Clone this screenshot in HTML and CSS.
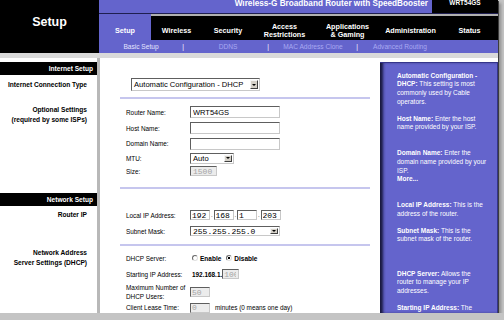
FILE: index.html
```html
<!DOCTYPE html>
<html lang="en">
<head>
    <meta charset="UTF-8">
    <meta name="viewport" content="width=device-width, initial-scale=1.0">
    <title>Setup - Basic Setup</title>
    <link rel="stylesheet" href="styles.css">
</head>
<body>

<div class="frame">
    <div class="header">
        <div class="page-title">Setup</div>
        <div class="nav">
            <div class="product">
                <span class="product-name">Wireless-G Broadband Router with SpeedBooster</span>
                <span class="model">WRT54GS</span>
            </div>
            <div class="tabs">
                <div class="tab active">Setup</div>
                <div class="tab t-wireless">Wireless</div>
                <div class="tab t-security">Security</div>
                <div class="tab t-access">Access<br>Restrictions</div>
                <div class="tab t-apps">Applications<br>&amp; Gaming</div>
                <div class="tab t-admin">Administration</div>
                <div class="tab t-status">Status</div>
            </div>
            <div class="subtabs">
                <span class="current">Basic Setup</span>
                <span class="sep">|</span>
                <span>DDNS</span>
                <span class="sep">|</span>
                <span>MAC Address Clone</span>
                <span class="sep">|</span>
                <span>Advanced Routing</span>
            </div>
        </div>
    </div>
    <div class="strip"></div>

    <div class="main">
        <div class="side">
            <div class="bar internet">Internet Setup</div>
            <div class="side-label conn">Internet Connection Type</div>
            <div class="side-label optional">Optional Settings<br>(required by some ISPs)</div>
            <div class="bar network">Network Setup</div>
            <div class="side-label router-ip">Router IP</div>
            <div class="side-label dhcp">Network Address<br>Server Settings (DHCP)</div>
        </div>

        <div class="content">
            <div class="conn-type">
                <div class="select conn-select">
                    <span class="select-value">Automatic Configuration - DHCP</span>
                    <span class="drop"></span>
                </div>
            </div>
            <div class="divider first"></div>

            <div class="row h16 top5">
                <span class="label">Router Name:</span>
                <input class="field name" type="text" value="WRT54GS">
            </div>
            <div class="row h16">
                <span class="label">Host Name:</span>
                <input class="field name" type="text" value="">
            </div>
            <div class="row h15">
                <span class="label">Domain Name:</span>
                <input class="field name" type="text" value="">
            </div>
            <div class="row h14">
                <span class="label">MTU:</span>
                <div class="select mtu-select">
                    <span class="select-value">Auto</span>
                    <span class="drop"></span>
                </div>
            </div>
            <div class="row h12">
                <span class="label">Size:</span>
                <input class="field mono size" type="text" value="1500" disabled>
            </div>

            <div class="divider second"></div>

            <div class="row h16 top18">
                <span class="label">Local IP Address:</span>
                <div class="ip">
                    <input class="field mono ip-part" type="text" value="192">
                    <span class="dot">.</span>
                    <input class="field mono ip-part" type="text" value="168">
                    <span class="dot">.</span>
                    <input class="field mono ip-part" type="text" value="1">
                    <span class="dot">.</span>
                    <input class="field mono ip-part" type="text" value="203">
                </div>
            </div>
            <div class="row h16">
                <span class="label">Subnet Mask:</span>
                <div class="select mask-select">
                    <span class="select-value mono">255.255.255.0</span>
                    <span class="drop"></span>
                </div>
            </div>

            <div class="divider third"></div>

            <div class="row h16 top4">
                <span class="label">DHCP Server:</span>
                <div class="radios">
                    <span class="radio"></span><b>Enable</b>
                    <span class="radio checked"></span><b>Disable</b>
                </div>
            </div>
            <div class="row h16">
                <span class="label">Starting IP Address:</span>
                <div class="start-ip">
                    <b>192.168.1.</b><input class="field mono small" type="text" value="100" disabled>
                </div>
            </div>
            <div class="row h20">
                <span class="label two-line">Maximum Number of<br>DHCP Users:</span>
                <input class="field mono users" type="text" value="50" disabled>
            </div>
            <div class="row h11">
                <span class="label">Client Lease Time:</span>
                <div class="lease">
                    <input class="field mono users" type="text" value="0" disabled>
                    <span>minutes (0 means one day)</span>
                </div>
            </div>
        </div>

        <div class="help">
            <p><b>Automatic Configuration - DHCP:</b> This setting is most commonly used by Cable operators.</p>
            <p class="gap1"><b>Host Name:</b> Enter the host name provided by your ISP.</p>
            <p class="gap2"><b>Domain Name:</b> Enter the domain name provided by your ISP.<br><b>More...</b></p>
            <p class="gap2"><b>Local IP Address:</b> This is the address of the router.</p>
            <p class="gap1"><b>Subnet Mask:</b> This is the subnet mask of the router.</p>
            <p class="gap3"><b>DHCP Server:</b> Allows the router to manage your IP addresses.</p>
            <p class="gap1"><b>Starting IP Address:</b> The</p>
        </div>
    </div>
</div>

</body>
</html>
```

FILE: styles.css
```css
body {
    margin: 0;
    background-color: #c4c4c4;
    font-family: "Liberation Sans", Arial, sans-serif;
}
.frame {
    width: 498px;
    height: 313px;
    overflow: hidden;
    background-color: #fff;
    box-shadow: 1px 1px 0 #3c3c3c, 3px 3px 3px #8c8c8c;
}

/* header */
.header {
    display: flex;
    height: 53px;
}
.page-title {
    width: 99px;
    box-sizing: border-box;
    padding-top: 15px;
    background-color: #000;
    color: #fff;
    font-size: 12.5px;
    font-weight: bold;
    text-align: center;
}
.nav {
    flex: 1;
    display: flex;
    flex-direction: column;
}
.product {
    display: flex;
    justify-content: flex-end;
    height: 13px;
    background-color: #6464cc;
    border-bottom: 1px solid #1e1e50;
}
.product-name {
    padding-right: 4px;
    color: #fff;
    font-size: 8.2px;
    font-weight: bold;
    line-height: 8px;
}
.model {
    width: 66px;
    background-color: #000;
    color: #fff;
    font-size: 6.5px;
    font-weight: bold;
    line-height: 6px;
    text-align: center;
}
.tabs {
    display: flex;
    height: 26px;
    background-color: #000;
}
.tab {
    display: flex;
    align-items: center;
    justify-content: center;
    box-sizing: border-box;
    padding-top: 6px;
    border-top: 2px solid #b0b0b0;
    color: #fff;
    font-size: 7.2px;
    font-weight: bold;
    line-height: 8px;
    text-align: center;
}
.tab.active {
    width: 52px;
    border-top-color: #6464cc;
    background-color: #6464cc;
}
.t-wireless { width: 51px; }
.t-security { width: 52px; }
.t-access { width: 61px; }
.t-apps { width: 65px; }
.t-admin { width: 61px; }
.t-status { width: 57px; }
.subtabs {
    display: grid;
    grid-template-columns: 48px 36px 54px 26px 64px 24px 62px;
    height: 13px;
    padding-left: 18px;
    background-color: #6464cc;
    color: #a9a9f2;
    font-size: 6.6px;
    line-height: 13px;
    text-align: center;
    white-space: nowrap;
}
.subtabs .current {
    color: #e4e4ff;
}
.subtabs .sep {
    color: #fff;
}
.strip {
    height: 5px;
    background-color: #dadada;
}

/* body */
.main {
    display: grid;
    grid-template-columns: 100px 280px 118px;
    height: 255px;
}
.side {
    border-right: 3px solid #b8b8b8;
    font-size: 6.6px;
    font-weight: bold;
    text-align: right;
}
.bar {
    height: 13px;
    padding-right: 4px;
    background-color: #000;
    color: #fff;
    line-height: 13px;
}
.bar.internet { margin-top: 4px; }
.bar.network { margin-top: 68px; }
.side-label {
    padding-right: 10px;
    color: #000;
}
.side-label.conn { line-height: 20px; }
.side-label.optional { margin-top: 10px; line-height: 10px; }
.side-label.router-ip { line-height: 18px; }
.side-label.dhcp { margin-top: 24px; line-height: 10px; }

.content {
    padding-left: 26px;
    font-size: 6.4px;
}
.conn-type {
    margin-top: 20px;
    padding-left: 5px;
}
.divider {
    height: 2px;
    margin-left: -6px;
    margin-right: 10px;
    background-color: #c6c6ee;
}
.divider.first { margin-top: 6px; }
.divider.second { margin-top: 10px; }
.divider.third { margin-top: 5px; }

.row {
    display: grid;
    grid-template-columns: 64px auto;
    align-items: center;
    justify-items: start;
}
.h11 { height: 11px; }
.h12 { height: 12px; }
.h14 { height: 14px; }
.h15 { height: 15px; }
.h16 { height: 16px; }
.h20 { height: 20px; }
.top4 { margin-top: 4px; }
.top5 { margin-top: 5px; }
.top18 { margin-top: 18px; }
.label {
    white-space: nowrap;
}
.label.two-line {
    line-height: 9px;
}

/* form controls */
.field {
    box-sizing: border-box;
    height: 12px;
    margin: 0;
    padding: 0 2px;
    border: 1px solid;
    border-color: #5e5e5e #c8c8c8 #c8c8c8 #5e5e5e;
    background-color: #fff;
    color: #000;
    font: 7.5px "Liberation Sans", Arial, sans-serif;
}
.field.mono {
    font-family: "Liberation Mono", monospace;
    font-size: 8px;
}
.field:disabled {
    background-color: #ececec;
    color: #a4a4a4;
}
.field.name { width: 90px; }
.field.size { width: 27px; height: 10px; }
.field.ip-part { width: 20px; height: 10px; padding-left: 1px; }
.field.small { width: 17px; height: 10px; padding-left: 1px; }
.field.users { width: 20px; height: 10px; padding-left: 1px; }

.select {
    display: flex;
    align-items: center;
    box-sizing: border-box;
    padding: 1px;
    border: 1px solid;
    border-color: #5e5e5e #c8c8c8 #c8c8c8 #5e5e5e;
    background-color: #fff;
    color: #000;
    font-size: 7.6px;
}
.select-value {
    flex: 1;
    padding-left: 1px;
    white-space: nowrap;
}
.select-value.mono {
    font-family: "Liberation Mono", monospace;
    font-size: 8px;
}
.conn-select { width: 129px; height: 13px; }
.mtu-select { width: 44px; height: 11px; }
.mask-select { width: 90px; height: 10px; }
.drop {
    display: flex;
    align-items: center;
    justify-content: center;
    box-sizing: border-box;
    width: 8px;
    height: 100%;
    border: 1px solid;
    border-color: #f4f4f4 #404040 #404040 #f4f4f4;
    background-color: #d4d0c8;
}
.drop::after {
    content: "";
    border-left: 2px solid transparent;
    border-right: 2px solid transparent;
    border-top: 2px solid #000;
}

.ip {
    display: flex;
    align-items: center;
}
.dot {
    width: 3.5px;
    text-align: center;
    font-size: 6px;
}
.radios {
    display: flex;
    align-items: center;
    font-size: 6.5px;
}
.radio {
    width: 4px;
    height: 4px;
    margin-left: 2px;
    margin-right: 2px;
    border: 1px solid;
    border-color: #6a6a6a #e0e0e0 #e0e0e0 #6a6a6a;
    border-radius: 50%;
    background-color: #fff;
}
.radio.checked {
    background: radial-gradient(circle, #000 0 1px, #fff 1.4px);
}
.radios b + .radio {
    margin-left: 5px;
}
.start-ip {
    display: flex;
    align-items: center;
    padding-left: 2px;
    font-size: 6.4px;
}
.lease {
    display: flex;
    align-items: center;
    gap: 5px;
}

/* help panel */
.help {
    margin-top: 4px;
    box-sizing: border-box;
    padding: 8.6px 9px 0 17px;
    border-top: 1px solid #34348a;
    border-right: 1px solid #34348a;
    background-color: #6464cc;
    box-shadow: inset 4px 0 3px -1px #18183e;
    color: #fff;
    font-size: 6.5px;
    line-height: 8.7px;
}
.help p {
    width: 90.5px;
    margin: 0;
}
.help .gap1 { margin-top: 8.3px; }
.help .gap2 { margin-top: 17px; }
.help .gap3 { margin-top: 25.6px; }
```
